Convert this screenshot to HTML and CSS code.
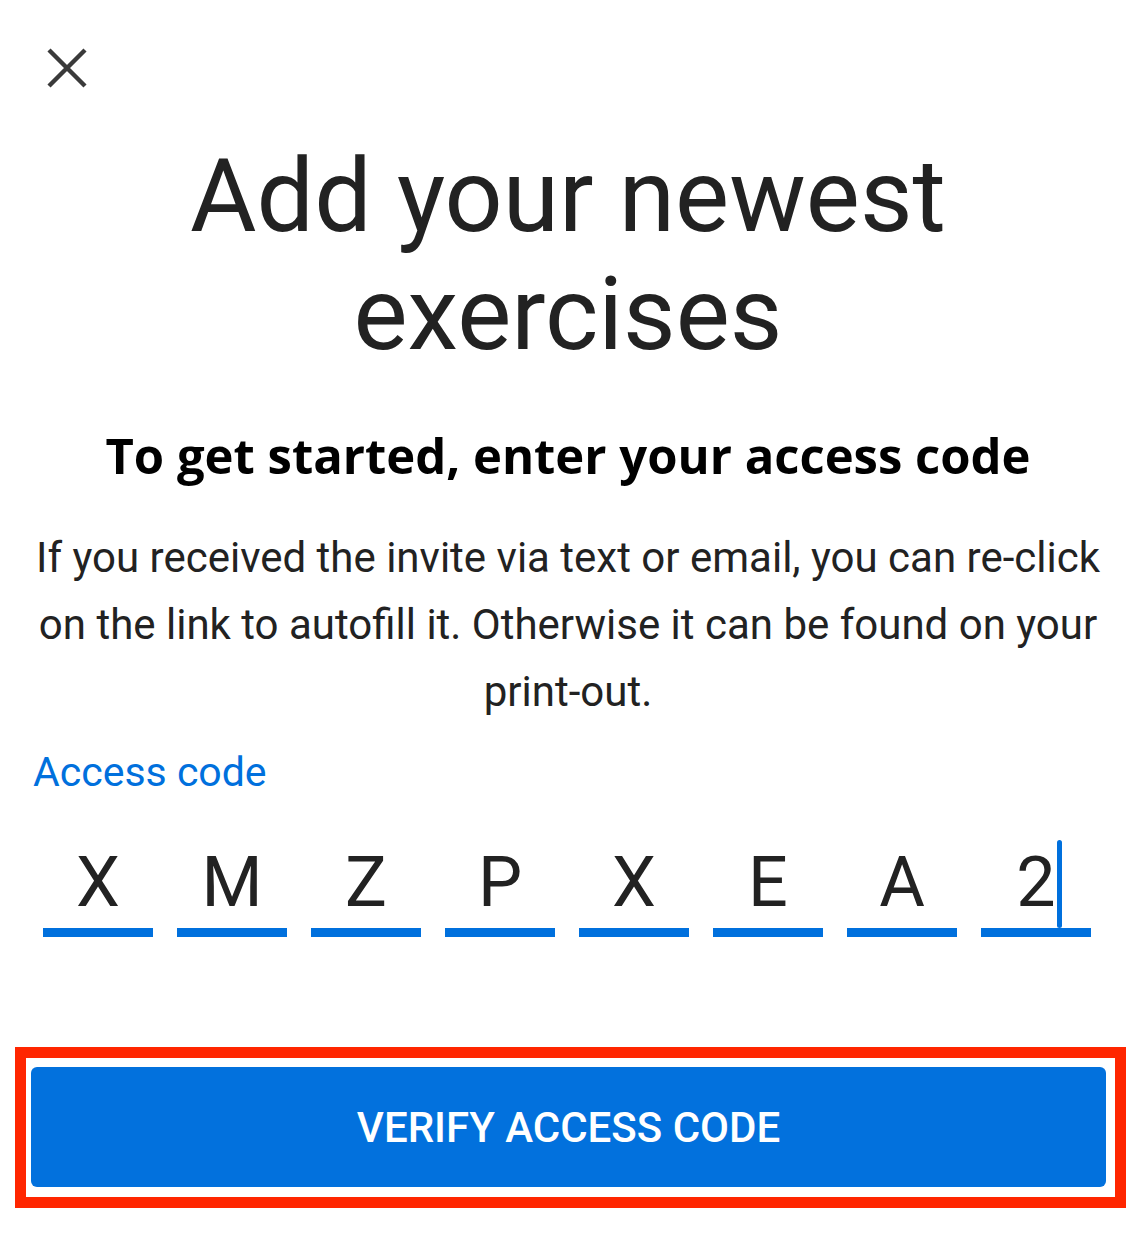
FILE: index.html
```html
<!DOCTYPE html>
<html lang="en">
<head>
<meta charset="utf-8">
<title>Add your newest exercises</title>
<link rel="stylesheet" href="styles.css">
</head>
<body>
<main class="page">
  <button class="close" aria-label="Close">
    <svg width="40" height="40" viewBox="0 0 40 40" aria-hidden="true">
      <path d="M2 2 L38 38 M38 2 L2 38" stroke="#3a3a3a" stroke-width="4.4" fill="none"/>
    </svg>
  </button>
  <h1 class="title">Add your newest exercises</h1>
  <h2 class="subtitle">To get started, enter your access code</h2>
  <p class="intro">If you received the invite via text or email, you can re-click on the link to autofill it. Otherwise it can be found on your print-out.</p>
  <label class="code-label">Access code</label>
  <div class="code-row">
    <div class="code-box">X</div>
    <div class="code-box">M</div>
    <div class="code-box">Z</div>
    <div class="code-box">P</div>
    <div class="code-box">X</div>
    <div class="code-box">E</div>
    <div class="code-box">A</div>
    <div class="code-box"><span class="last">2<span class="caret"></span></span></div>
  </div>
  <div class="highlight">
    <button class="verify">VERIFY ACCESS CODE</button>
  </div>
</main>
</body>
</html>
```

FILE: styles.css
```css
* { box-sizing: border-box; }
html, body {
  margin: 0;
  background: #ffffff;
}
body {
  font-family: Roboto, "Liberation Sans", sans-serif;
  color: #222222;
}
.page {
  width: 1142px;
  padding: 0 37px 0 31px;
  display: flex;
  flex-direction: column;
}
.close {
  align-self: flex-start;
  margin: 48px 0 0 16px;
  padding: 0;
  border: 0;
  background: none;
  width: 40px;
  height: 40px;
  display: block;
}
.close svg { display: block; }
.title {
  margin: 49px 0 0;
  font-size: 102px;
  font-weight: 400;
  line-height: 118px;
  text-align: center;
  color: #222222;
  letter-spacing: 0;
}
.subtitle {
  margin: 52px 0 0;
  font-family: "Open Sans", sans-serif;
  font-weight: 700;
  font-size: 49px;
  line-height: 60px;
  text-align: center;
  color: #000000;
  letter-spacing: 0;
}
.intro {
  margin: 39px 0 0;
  font-size: 42px;
  line-height: 67px;
  text-align: center;
  color: #222222;
}
.code-label {
  margin: 17px 0 0 2px;
  font-size: 41px;
  line-height: 60px;
  color: #0070dd;
}
.code-row {
  margin: 40px 0 0 12px;
  width: 1050px;
  display: flex;
  gap: 24px;
}
.code-box {
  width: 110px;
  height: 95px;
  border-bottom: 9px solid #0070dd;
  font-size: 70px;
  line-height: 80px;
  text-align: center;
  color: #222222;
}
.last {
  position: relative;
  display: inline-block;
}
.caret {
  position: absolute;
  right: -6px;
  top: -2px;
  width: 5px;
  height: 88px;
  border-radius: 3px;
  background: #0070dd;
}
.highlight {
  margin: 110px 0 0 -16px;
  width: 1111px;
  border: 11px solid #ff2600;
  padding: 9px 9px 10px 5px;
}
.verify {
  display: block;
  width: 100%;
  height: 120px;
  border: 0;
  border-radius: 6px;
  background: #0271dd;
  color: #ffffff;
  font-family: Roboto, sans-serif;
  font-weight: 500;
  font-size: 42px;
  letter-spacing: 0;
}
```
